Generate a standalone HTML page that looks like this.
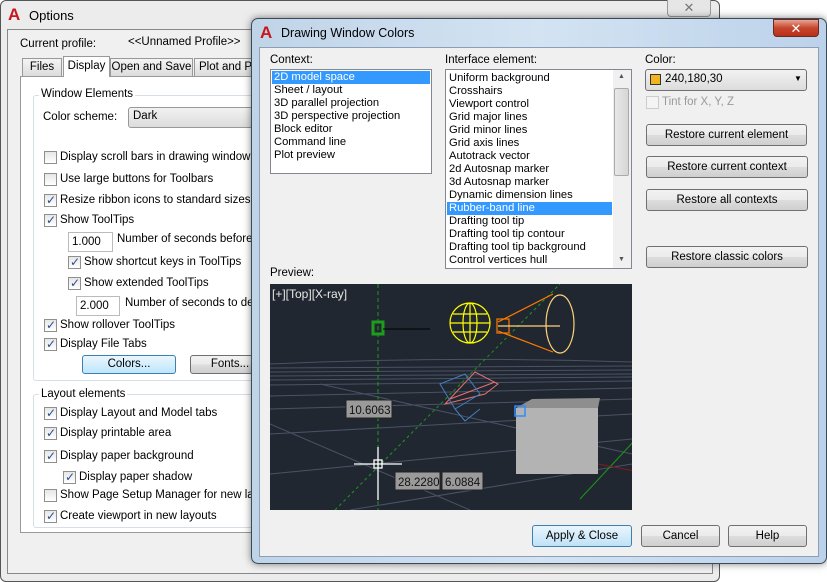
<!DOCTYPE html>
<html><head><meta charset="utf-8">
<style>
*{box-sizing:border-box;margin:0;padding:0}
body{width:827px;height:582px;overflow:hidden;background:#fff;font-family:"Liberation Sans","DejaVu Sans",sans-serif;font-size:11.5px;color:#000;position:relative}
.a{position:absolute;white-space:nowrap}
.cb{position:absolute;width:13px;height:13px;border:1px solid #8f8f8f;background:linear-gradient(#e6e6e6,#fff)}
.cb.on::after{content:"✓";position:absolute;left:1px;top:-2px;font-size:12px;color:#2a4d8a;font-weight:bold}
.btn{position:absolute;border:1px solid #707070;border-radius:3px;background:linear-gradient(#f2f2f2 0,#ebebeb 50%,#dddddd 51%,#cfcfcf 100%);text-align:center;font-size:11.5px}
.lbl{position:absolute;font-size:11.5px;white-space:nowrap}
.logo{position:absolute;color:#c8161d;font-weight:bold;font-size:17px;font-family:"Liberation Sans",sans-serif}
.li{height:13px;line-height:13px;padding-left:2px;font-size:11.2px}
.sel{background:#3399ff;color:#fff}
</style></head><body>
<div class="a" style="left:0;top:0;width:720px;height:582px;border:1px solid #555;border-radius:6px;background:#ececec"></div>
<div class="logo" style="left:8px;top:5px">A</div>
<div class="lbl" style="left:29px;top:8px;font-size:13px">Options</div>
<div class="a" style="left:667px;top:0;width:44px;height:17px;border:1px solid #999;border-top:none;border-radius:0 0 4px 4px;background:#e6e6e6;text-align:center;color:#777;font-size:13px">✕</div>
<div class="a" style="left:7px;top:29px;width:706px;height:545px;border:1px solid #888;background:#f0f0f0"></div>
<div class="lbl" style="left:20px;top:38px">Current profile:</div>
<div class="lbl" style="left:128px;top:36px">&lt;&lt;Unnamed Profile&gt;&gt;</div>
<div class="a" style="left:20px;top:76px;width:700px;height:457px;border:1px solid #999;background:#fff"></div>
<div class="a" style="left:22px;top:58px;width:40px;height:19px;border:1px solid #999;background:linear-gradient(#f4f4f4,#dcdcdc);text-align:center;font-size:11.5px;line-height:17px">Files</div>
<div class="a" style="left:63px;top:56px;width:47px;height:21px;border:1px solid #999;border-bottom:none;background:#fff;text-align:center;font-size:11.5px;line-height:18px">Display</div>
<div class="a" style="left:110px;top:58px;width:83px;height:19px;border:1px solid #999;background:linear-gradient(#f4f4f4,#dcdcdc);text-align:center;font-size:11.5px;line-height:17px">Open and Save</div>
<div class="a" style="left:194px;top:58px;width:80px;height:19px;border:1px solid #999;background:linear-gradient(#f4f4f4,#dcdcdc);font-size:11.5px;line-height:17px;padding-left:4px">Plot and Publish</div>
<div class="a" style="left:33px;top:95px;width:300px;height:286px;border:1px solid #d5dfe5;border-radius:3px"></div>
<div class="lbl" style="left:39px;top:88px;background:#fff;padding:0 2px">Window Elements</div>
<div class="lbl" style="left:43px;top:111px">Color scheme:</div>
<div class="a" style="left:128px;top:107px;width:200px;height:21px;border:1px solid #999;border-radius:3px;background:linear-gradient(#f2f2f2,#dcdcdc);padding:2px 4px;font-size:11.5px">Dark</div>
<div class="cb" style="left:44px;top:151px"></div><div class="lbl" style="left:60px;top:151px">Display scroll bars in drawing window</div>
<div class="cb" style="left:44px;top:173px"></div><div class="lbl" style="left:60px;top:173px">Use large buttons for Toolbars</div>
<div class="cb on" style="left:44px;top:194px"></div><div class="lbl" style="left:60px;top:194px">Resize ribbon icons to standard sizes</div>
<div class="cb on" style="left:44px;top:214px"></div><div class="lbl" style="left:60px;top:214px">Show ToolTips</div>
<div class="a" style="left:68px;top:232px;width:45px;height:20px;border:1px solid #bbb;padding:3px 3px;font-size:11.5px">1.000</div>
<div class="lbl" style="left:117px;top:233px">Number of seconds before display</div>
<div class="cb on" style="left:68px;top:256px"></div><div class="lbl" style="left:84px;top:256px">Show shortcut keys in ToolTips</div>
<div class="cb on" style="left:68px;top:277px"></div><div class="lbl" style="left:84px;top:277px">Show extended ToolTips</div>
<div class="a" style="left:76px;top:296px;width:44px;height:20px;border:1px solid #bbb;padding:3px 3px;font-size:11.5px">2.000</div>
<div class="lbl" style="left:125px;top:297px">Number of seconds to delay</div>
<div class="cb on" style="left:44px;top:319px"></div><div class="lbl" style="left:60px;top:319px">Show rollover ToolTips</div>
<div class="cb on" style="left:44px;top:338px"></div><div class="lbl" style="left:60px;top:338px">Display File Tabs</div>
<div class="btn" style="left:82px;top:355px;width:94px;height:19px;border-color:#3c7fb1;background:linear-gradient(#eaf6fd,#bee6fd);line-height:17px">Colors...</div>
<div class="btn" style="left:190px;top:355px;width:80px;height:19px;line-height:17px">Fonts...</div>
<div class="a" style="left:33px;top:394px;width:300px;height:134px;border:1px solid #d5dfe5;border-radius:3px"></div>
<div class="lbl" style="left:39px;top:388px;background:#fff;padding:0 2px">Layout elements</div>
<div class="cb on" style="left:44px;top:407px"></div><div class="lbl" style="left:60px;top:407px">Display Layout and Model tabs</div>
<div class="cb on" style="left:44px;top:427px"></div><div class="lbl" style="left:60px;top:427px">Display printable area</div>
<div class="cb on" style="left:44px;top:450px"></div><div class="lbl" style="left:60px;top:450px">Display paper background</div>
<div class="cb on" style="left:63px;top:471px"></div><div class="lbl" style="left:79px;top:471px">Display paper shadow</div>
<div class="cb" style="left:44px;top:489px"></div><div class="lbl" style="left:60px;top:489px">Show Page Setup Manager for new layouts</div>
<div class="cb on" style="left:44px;top:510px"></div><div class="lbl" style="left:60px;top:510px">Create viewport in new layouts</div>

<div class="a" style="left:251px;top:18px;width:576px;height:546px;border:1px solid #3a4a5a;border-radius:7px;background:linear-gradient(90deg,#c0d4e8,#d3e3f2 50%,#bcd2ea);box-shadow:0 0 8px rgba(0,0,0,.5)"></div>
<div class="logo" style="left:260px;top:23px">A</div>
<div class="lbl" style="left:281px;top:26px;font-size:12.5px">Drawing Window Colors</div>
<div class="a" style="left:773px;top:19px;width:46px;height:18px;border:1px solid #6a2a20;border-radius:0 0 4px 4px;background:linear-gradient(#e8a493,#c7452c 50%,#b8301a);color:#fff;text-align:center;font-size:13px;font-weight:bold;line-height:17px">✕</div>
<div class="a" style="left:259px;top:47px;width:560px;height:510px;border:1px solid #8aa0b8;background:#f0f0f0"></div>
<div class="lbl" style="left:270px;top:54px">Context:</div>
<div class="a" style="left:270px;top:69px;width:162px;height:105px;border:1px solid #828790;background:#fff;padding:1px">
<div class="li sel">2D model space</div><div class="li">Sheet / layout</div><div class="li">3D parallel projection</div><div class="li">3D perspective projection</div><div class="li">Block editor</div><div class="li">Command line</div><div class="li">Plot preview</div></div>
<div class="lbl" style="left:445px;top:54px">Interface element:</div>
<div class="a" style="left:445px;top:69px;width:187px;height:200px;border:1px solid #828790;background:#fff;padding:2px 19px 0 1px">
<div class="li">Uniform background</div><div class="li">Crosshairs</div><div class="li">Viewport control</div><div class="li">Grid major lines</div><div class="li">Grid minor lines</div><div class="li">Grid axis lines</div><div class="li">Autotrack vector</div><div class="li">2d Autosnap marker</div><div class="li">3d Autosnap marker</div><div class="li">Dynamic dimension lines</div><div class="li sel">Rubber-band line</div><div class="li">Drafting tool tip</div><div class="li">Drafting tool tip contour</div><div class="li">Drafting tool tip background</div><div class="li">Control vertices hull</div></div>
<div class="a" style="left:613px;top:70px;width:18px;height:198px;background:#f0f0f0"></div>
<div class="a" style="left:614px;top:88px;width:15px;height:88px;border:1px solid #aaa;border-radius:2px;background:linear-gradient(90deg,#e8e8e8,#d6d6d6)"></div>
<div class="a" style="left:618px;top:73px;font-size:7px;color:#555">▲</div>
<div class="a" style="left:618px;top:256px;font-size:7px;color:#555">▼</div>
<div class="lbl" style="left:645px;top:54px">Color:</div>
<div class="a" style="left:645px;top:69px;width:162px;height:22px;border:1px solid #707070;border-radius:3px;background:linear-gradient(#f2f2f2,#dcdcdc)"></div>
<div class="a" style="left:650px;top:74px;width:11px;height:11px;border:1px solid #333;background:#f0b41e"></div>
<div class="lbl" style="left:665px;top:73px">240,180,30</div>
<div class="a" style="left:794px;top:74px;font-size:8px">▼</div>
<div class="cb" style="left:646px;top:96px;border-color:#ccc;background:#f4f4f4"></div>
<div class="lbl" style="left:662px;top:96px;color:#999">Tint for X, Y, Z</div>
<div class="btn" style="left:646px;top:124px;width:161px;height:22px;line-height:20px">Restore current element</div>
<div class="btn" style="left:646px;top:156px;width:162px;height:22px;line-height:20px">Restore current context</div>
<div class="btn" style="left:646px;top:189px;width:162px;height:22px;line-height:20px">Restore all contexts</div>
<div class="btn" style="left:646px;top:246px;width:162px;height:22px;line-height:20px">Restore classic colors</div>
<div class="lbl" style="left:270px;top:267px">Preview:</div>
<svg class="a" style="left:270px;top:284px" width="362" height="226" viewBox="0 0 362 226">
<rect width="362" height="226" fill="#212730"/>
<g stroke="#4a5266" stroke-width="1" fill="none">
<path d="M0 80 Q180 72 362 78"/><path d="M0 84 L362 82"/><path d="M0 88 L362 86"/><path d="M0 92 L362 90"/><path d="M0 96 L362 93"/><path d="M0 101 L362 97"/>
<path d="M0 112 L362 104"/><path d="M0 125 L362 115"/><path d="M0 150 L362 130"/><path d="M0 190 L362 155"/><path d="M80 226 L362 180"/>
<path d="M50 100 L362 170"/><path d="M0 140 L200 226"/>
</g>
<path d="M108 0 V226" stroke="#1a9a1a" stroke-dasharray="4 3"/>
<path d="M65 226 L290 0" stroke="#1a9a1a" stroke-dasharray="3 3"/>
<path d="M310 215 L380 140" stroke="#1a9a1a"/>
<path d="M250 165 L380 190" stroke="#8a1a1a"/>
<rect x="103" y="38" width="10" height="12" fill="none" stroke="#1c9e1c" stroke-width="3"/>
<line x1="113" y1="45" x2="160" y2="45" stroke="#000"/>
<g stroke="#ffff00" fill="none" stroke-width="1.2"><circle cx="200" cy="39" r="20"/><ellipse cx="200" cy="39" rx="7" ry="20"/><line x1="180" y1="39" x2="220" y2="39"/><line x1="200" y1="19" x2="200" y2="59"/><line x1="183" y1="30" x2="217" y2="30"/><line x1="183" y1="48" x2="217" y2="48"/></g>
<g stroke="#ff7a00" fill="none" stroke-width="1.2"><path d="M228 38 L283 10 M228 47 L283 68"/><ellipse cx="290" cy="40" rx="14" ry="29" stroke="#ffd27a"/><rect x="227" y="35" width="12" height="14"/><line x1="228" y1="42" x2="290" y2="42" stroke="#ffd27a"/></g>
<g stroke="#e87070" fill="none"><path d="M175 120 L205 88 L228 100 L215 110 Z M180 115 L225 98"/></g>
<g stroke="#4080c0" fill="none"><path d="M170 100 L195 90 L210 110 L185 125 Z M185 125 L195 137 L210 125"/></g>
<g><rect x="246" y="124" width="82" height="66" fill="#b3b3b3"/><path d="M246 124 L262 115 L330 114 L328 124 Z" fill="#8e8e8e"/><rect x="245" y="122" width="10" height="10" fill="none" stroke="#2a8cff" stroke-width="1.5"/></g>
<path d="M108 163 V216 M84 180 H132" stroke="#fff" stroke-width="1.3"/>
<rect x="104" y="176" width="8" height="8" fill="none" stroke="#fff" stroke-width="1.3"/>
<rect x="76" y="116" width="46" height="18" fill="#9a9a9a" stroke="#222"/><text x="79" y="130" font-size="11.5" fill="#111" font-family="Liberation Sans">10.6063</text>
<rect x="125" y="188" width="45" height="18" fill="#9a9a9a" stroke="#222"/><text x="128" y="202" font-size="11.5" fill="#111" font-family="Liberation Sans">28.2280</text>
<rect x="172" y="188" width="41" height="18" fill="#9a9a9a" stroke="#222"/><text x="175" y="202" font-size="11.5" fill="#111" font-family="Liberation Sans">6.0884</text>
<text x="2" y="14" font-size="12" fill="#e8e8e8" font-family="Liberation Sans">[+][Top][X-ray]</text>
</svg>
<div class="btn" style="left:532px;top:525px;width:100px;height:22px;line-height:20px;border-color:#3c7fb1;background:linear-gradient(#eaf6fd,#bfe2f6)">Apply &amp; Close</div>
<div class="btn" style="left:641px;top:525px;width:79px;height:22px;line-height:20px">Cancel</div>
<div class="btn" style="left:728px;top:525px;width:79px;height:22px;line-height:20px">Help</div>
</body></html>
